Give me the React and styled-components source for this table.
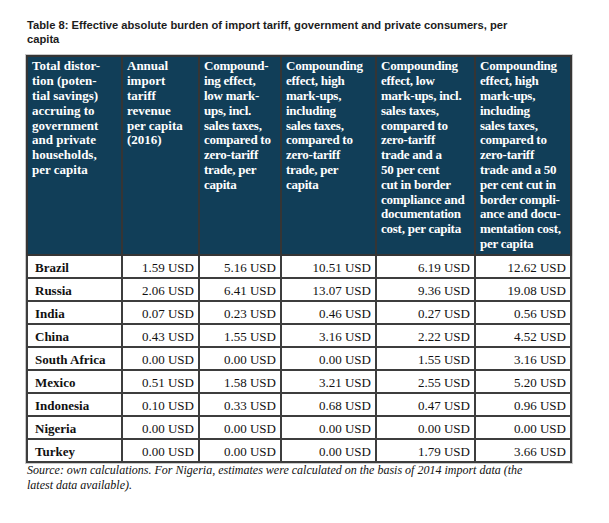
import React from "react";
import styled, { createGlobalStyle } from "styled-components";

const Global = createGlobalStyle`
  html, body { margin: 0; padding: 0; background: #ffffff; }
  body { font-family: "Liberation Serif", "Times New Roman", serif; }
`;

const Page = styled.div`
  width: 609px;
  height: 523px;
  padding: 19px 0 0 26px;
  box-sizing: border-box;
`;

const Title = styled.h1`
  margin: 0 0 9px 1px;
  font-family: "Liberation Sans", Arial, sans-serif;
  font-weight: bold;
  font-size: 11.2px;
  line-height: 13.7px;
  color: #1c1c1c;
`;

const Table = styled.table`
  border-collapse: collapse;
  table-layout: fixed;
  width: 544px;
  outline: 1px solid #c9c9c9;
`;

const HeadCell = styled.th`
  background: #113e58;
  color: #ffffff;
  font-weight: bold;
  font-size: 13px;
  line-height: 14.8px;
  text-align: left;
  vertical-align: top;
  white-space: nowrap;
  letter-spacing: ${(p) => (p.$tight ? "-0.25px" : "0")};
  padding: 2px 3px 2px 4px;
  border: 2px solid #353535;
`;

const NameCell = styled.td`
  border: 2px solid #3d3d3d;
  font-weight: bold;
  font-size: 13px;
  line-height: 15px;
  color: #111;
  padding: 4px 4px 2px 7px;
  vertical-align: middle;
  white-space: nowrap;
`;

const NumCell = styled.td`
  border: 2px solid #3d3d3d;
  font-size: 13px;
  line-height: 15px;
  color: #111;
  text-align: right;
  padding: 4px 4px 2px 4px;
  vertical-align: middle;
  white-space: nowrap;
`;

const Source = styled.p`
  margin: 0 0 0 1px;
  font-style: italic;
  font-size: 12px;
  line-height: 15px;
  color: #111;
`;

const headers = [
  { lines: ["Total distor-", "tion (poten-", "tial savings)", "accruing to", "government", "and private", "households,", "per capita"] },
  { lines: ["Annual", "import", "tariff", "revenue", "per capita", "(2016)"] },
  { lines: ["Compound-", "ing effect,", "low mark-", "ups, incl.", "sales taxes,", "compared to", "zero-tariff", "trade, per", "capita"], tight: true },
  { lines: ["Compounding", "effect, high", "mark-ups,", "including", "sales taxes,", "compared to", "zero-tariff", "trade, per", "capita"], tight: true },
  { lines: ["Compounding", "effect, low", "mark-ups, incl.", "sales taxes,", "compared to", "zero-tariff", "trade and a", "50 per cent", "cut in border", "compliance and", "documentation", "cost, per capita"], tight: true },
  { lines: ["Compounding", "effect, high", "mark-ups,", "including", "sales taxes,", "compared to", "zero-tariff", "trade and a 50", "per cent cut in", "border compli-", "ance and docu-", "mentation cost,", "per capita"], tight: true },
];

const rows = [
  ["Brazil", "1.59", "5.16", "10.51", "6.19", "12.62"],
  ["Russia", "2.06", "6.41", "13.07", "9.36", "19.08"],
  ["India", "0.07", "0.23", "0.46", "0.27", "0.56"],
  ["China", "0.43", "1.55", "3.16", "2.22", "4.52"],
  ["South Africa", "0.00", "0.00", "0.00", "1.55", "3.16"],
  ["Mexico", "0.51", "1.58", "3.21", "2.55", "5.20"],
  ["Indonesia", "0.10", "0.33", "0.68", "0.47", "0.96"],
  ["Nigeria", "0.00", "0.00", "0.00", "0.00", "0.00"],
  ["Turkey", "0.00", "0.00", "0.00", "1.79", "3.66"],
];

const widths = [95, 77, 82, 95, 99, 96];

export default function App() {
  return (
    <Page>
      <Global />
      <Title>
        Table 8: Effective absolute burden of import tariff, government and private consumers, per
        <br />
        capita
      </Title>
      <Table>
        <colgroup>
          {widths.map((w, i) => (
            <col key={i} style={{ width: w }} />
          ))}
        </colgroup>
        <thead>
          <tr>
            {headers.map((h, i) => (
              <HeadCell key={i} $tight={h.tight}>
                {h.lines.map((l, j) => (
                  <React.Fragment key={j}>
                    {l}
                    {j < h.lines.length - 1 && <br />}
                  </React.Fragment>
                ))}
              </HeadCell>
            ))}
          </tr>
        </thead>
        <tbody>
          {rows.map((r) => (
            <tr key={r[0]}>
              <NameCell>{r[0]}</NameCell>
              {r.slice(1).map((v, i) => (
                <NumCell key={i}>{v} USD</NumCell>
              ))}
            </tr>
          ))}
        </tbody>
      </Table>
      <Source>
        Source: own calculations. For Nigeria, estimates were calculated on the basis of 2014 import data (the
        <br />
        latest data available).
      </Source>
    </Page>
  );
}
